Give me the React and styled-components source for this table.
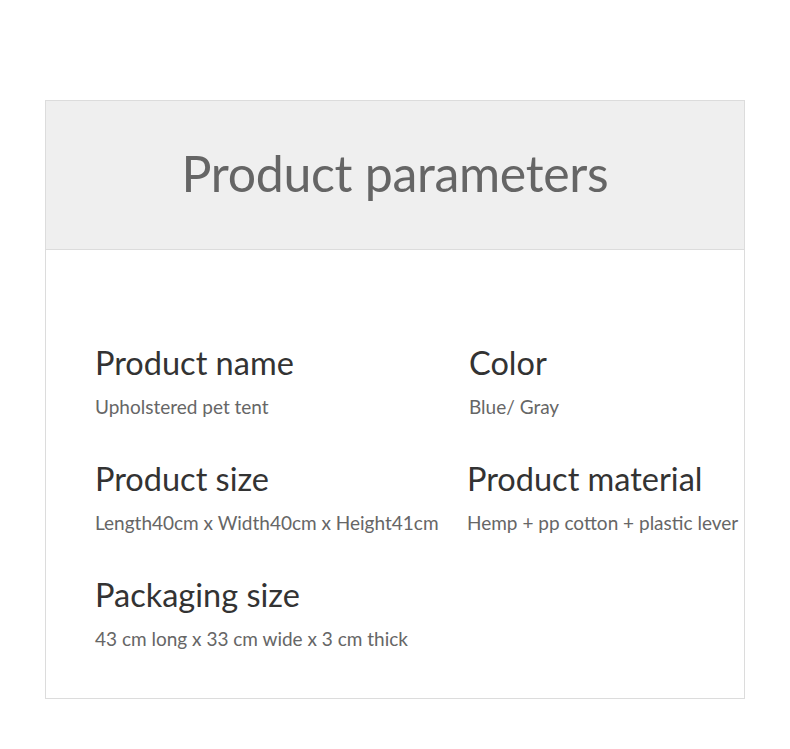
import React from 'react';
import styled, { createGlobalStyle } from 'styled-components';

const GlobalStyle = createGlobalStyle`
  html, body {
    margin: 0;
    padding: 0;
    background: #ffffff;
  }
  body {
    font-family: Lato, "Noto Sans", sans-serif;
  }
`;

const Page = styled.div`
  width: 790px;
  height: 749px;
  padding-top: 100px;
  box-sizing: border-box;
`;

const Card = styled.section`
  width: 700px;
  height: 599px;
  margin: 0 auto;
  border: 1px solid #dcdcdc;
  box-sizing: border-box;
  display: flex;
  flex-direction: column;
`;

const Header = styled.header`
  height: 149px;
  background-color: #efefef;
  border-bottom: 1px solid #dcdcdc;
  display: flex;
  align-items: center;
  justify-content: center;
  box-sizing: border-box;
`;

const Title = styled.h1`
  margin: 0;
  padding-bottom: 4px;
  font-size: 50px;
  font-weight: 400;
  color: #656565;
  letter-spacing: -0.3px;
`;

const Body = styled.div`
  display: grid;
  grid-template-columns: 372px 1fr;
  row-gap: 42px;
  padding: 95px 0 0 49px;
`;

const Item = styled.div`
  display: flex;
  flex-direction: column;
  gap: 14px;
  margin-left: ${p => p.$shift || 0}px;
`;

const Label = styled.div`
  font-size: 32.5px;
  line-height: 36px;
  color: #333333;
  white-space: nowrap;
`;

const Value = styled.div`
  font-size: 19px;
  line-height: 24px;
  color: #666666;
  white-space: nowrap;
`;

const params = [
  { label: 'Product name', value: 'Upholstered pet tent' },
  { label: 'Color', value: 'Blue/ Gray', shift: 2 },
  { label: 'Product size', value: 'Length40cm x Width40cm x Height41cm' },
  { label: 'Product material', value: 'Hemp + pp cotton + plastic lever' },
  { label: 'Packaging size', value: '43 cm long x 33 cm wide x 3 cm thick' },
];

export default function App() {
  return (
    <>
      <GlobalStyle />
      <Page>
        <Card>
          <Header>
            <Title>Product parameters</Title>
          </Header>
          <Body>
            {params.map(p => (
              <Item key={p.label} $shift={p.shift}>
                <Label>{p.label}</Label>
                <Value>{p.value}</Value>
              </Item>
            ))}
          </Body>
        </Card>
      </Page>
    </>
  );
}
